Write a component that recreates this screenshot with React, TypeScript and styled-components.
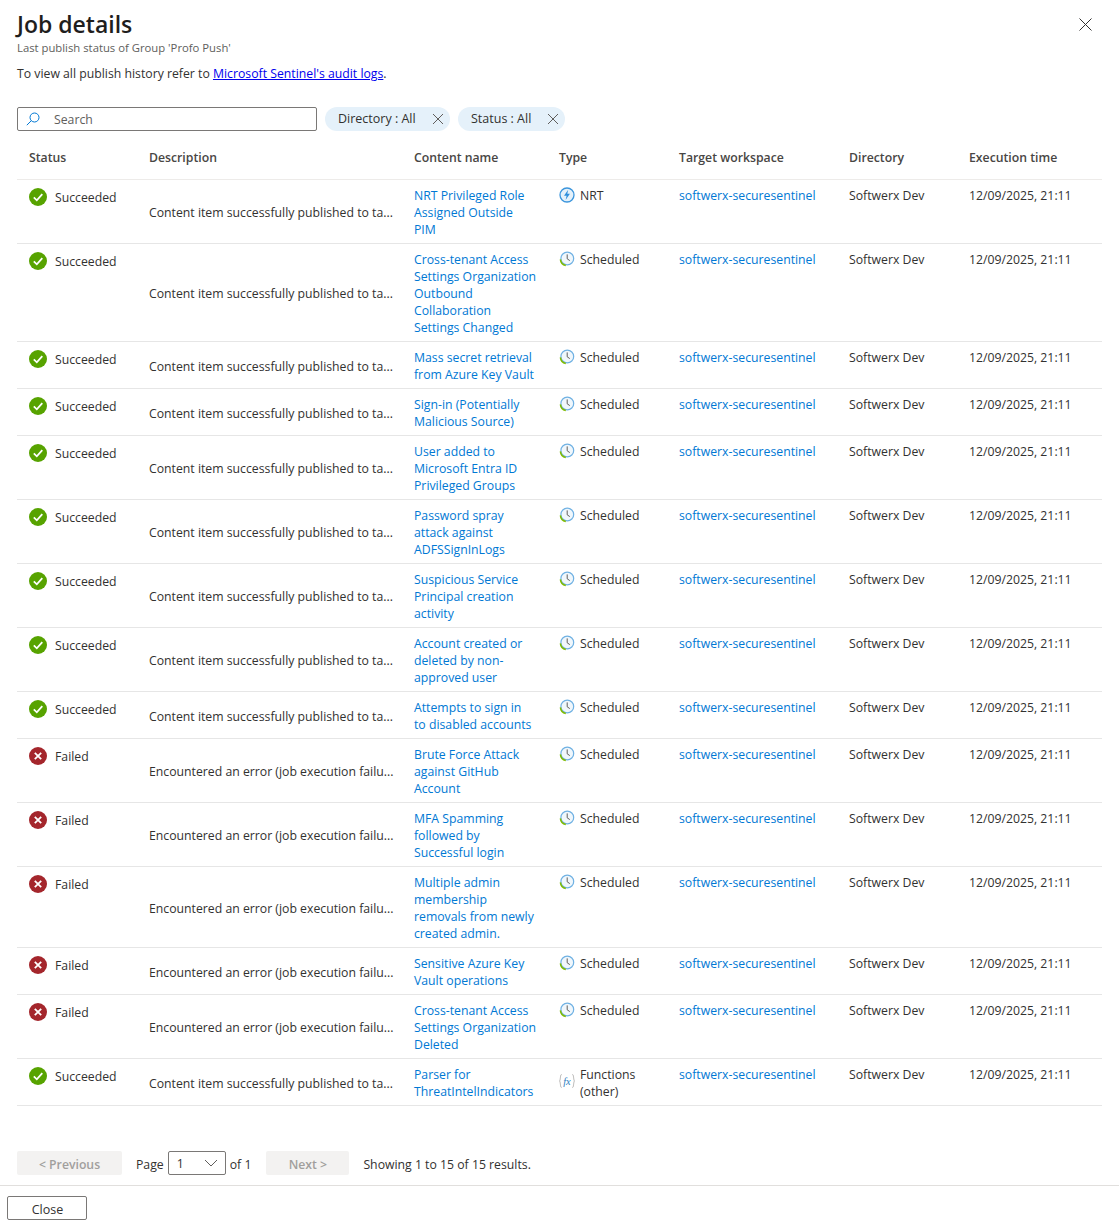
import styled, { createGlobalStyle } from 'styled-components';

const GlobalStyle = createGlobalStyle`
  html, body {
    margin: 0;
    padding: 0;
    background: #fff;
  }
  body {
    font-family: 'Open Sans', 'Noto Sans', sans-serif;
    font-size: 12.25px;
    color: #323130;
  }
`;

type JobRow = {
  ok: boolean;
  name: string[];
  kind: 'nrt' | 'scheduled' | 'functions';
};

const OK_TEXT = 'Content item successfully published to ta...';
const FAIL_TEXT = 'Encountered an error (job execution failu...';

const rows: JobRow[] = [
  { ok: true, kind: 'nrt', name: ['NRT Privileged Role', 'Assigned Outside', 'PIM'] },
  { ok: true, kind: 'scheduled', name: ['Cross-tenant Access', 'Settings Organization', 'Outbound', 'Collaboration', 'Settings Changed'] },
  { ok: true, kind: 'scheduled', name: ['Mass secret retrieval', 'from Azure Key Vault'] },
  { ok: true, kind: 'scheduled', name: ['Sign-in (Potentially', 'Malicious Source)'] },
  { ok: true, kind: 'scheduled', name: ['User added to', 'Microsoft Entra ID', 'Privileged Groups'] },
  { ok: true, kind: 'scheduled', name: ['Password spray', 'attack against', 'ADFSSignInLogs'] },
  { ok: true, kind: 'scheduled', name: ['Suspicious Service', 'Principal creation', 'activity'] },
  { ok: true, kind: 'scheduled', name: ['Account created or', 'deleted by non-', 'approved user'] },
  { ok: true, kind: 'scheduled', name: ['Attempts to sign in', 'to disabled accounts'] },
  { ok: false, kind: 'scheduled', name: ['Brute Force Attack', 'against GitHub', 'Account'] },
  { ok: false, kind: 'scheduled', name: ['MFA Spamming', 'followed by', 'Successful login'] },
  { ok: false, kind: 'scheduled', name: ['Multiple admin', 'membership', 'removals from newly', 'created admin.'] },
  { ok: false, kind: 'scheduled', name: ['Sensitive Azure Key', 'Vault operations'] },
  { ok: false, kind: 'scheduled', name: ['Cross-tenant Access', 'Settings Organization', 'Deleted'] },
  { ok: true, kind: 'functions', name: ['Parser for', 'ThreatIntelIndicators'] },
];

const columns = '120px 265px 145px 120px 170px 120px 145px';

const Page = styled.div`
  height: 1221px;
  display: flex;
  flex-direction: column;
  overflow: hidden;
`;

const Main = styled.main`
  flex: 1;
  padding: 10px 17px 0;
`;

const TitleBar = styled.div`
  display: flex;
  justify-content: space-between;
  align-items: flex-start;
`;

const Title = styled.h1`
  margin: 0;
  font-size: 23px;
  line-height: 28px;
  font-weight: 600;
  color: #1f1e1d;
`;

const Subtitle = styled.div`
  margin-top: 2px;
  font-size: 11.3px;
  line-height: 16px;
  color: #605e5c;
`;

const Intro = styled.p`
  margin: 9px 0 0;
  line-height: 17px;
  color: #323130;

  a {
    color: #0000ee;
    text-decoration: underline;
  }
`;

const CloseX = styled.svg`
  width: 13px;
  height: 13px;
  margin: 8px 10px 0 0;
  stroke: #323130;
  stroke-width: 1;
  flex: none;
`;

const FilterBar = styled.div`
  display: flex;
  align-items: center;
  gap: 8px;
  margin-top: 25px;
`;

const SearchBox = styled.div`
  width: 300px;
  height: 24px;
  box-sizing: border-box;
  border: 1px solid #7a7876;
  border-radius: 2px;
  display: flex;
  align-items: center;
  gap: 14px;
  padding-left: 8px;
  color: #605e5c;
`;

const SearchIcon = styled.svg`
  width: 14px;
  height: 14px;
  fill: none;
  stroke: #0078d4;
  stroke-width: 1;
`;

const Pill = styled.div<{ $width: number }>`
  width: ${(p) => p.$width}px;
  height: 24px;
  box-sizing: border-box;
  padding: 0 6px 1px 13px;
  background: #e5f1fa;
  border-radius: 12px;
  display: flex;
  align-items: center;
  justify-content: space-between;
  font-size: 12.5px;
  color: #323130;
`;

const PillX = styled.svg`
  width: 12px;
  height: 12px;
  stroke: #605e5c;
  stroke-width: 1;
`;

const Grid = styled.div`
  display: grid;
  grid-template-columns: ${columns};
  align-items: stretch;
`;

const HeaderRow = styled(Grid)`
  height: 45px;
  margin-top: 4px;
  align-items: center;
  border-bottom: 1px solid #edebe9;
  box-sizing: border-box;
`;

const HeaderCell = styled.div`
  padding-left: 12px;
  font-weight: 600;
  color: #484644;
`;

const Row = styled(Grid)`
  border-bottom: 1px solid #e6e6e6;
  box-sizing: border-box;
  padding: 7px 0 5px;
  line-height: 17px;
`;

const Cell = styled.div`
  padding-left: 12px;
  min-width: 0;
`;

const StatusCell = styled(Cell)`
  display: flex;
  align-items: flex-start;
  gap: 8px;
  padding-top: 2px;
`;

const StatusIcon = styled.svg`
  width: 18px;
  height: 18px;
  margin-top: -1px;
  flex: none;
`;

const Description = styled(Cell)`
  align-self: center;
  white-space: nowrap;
`;

const LinkText = styled.a`
  color: #0078d4;
  text-decoration: none;
  display: block;
  white-space: nowrap;
`;

const TypeCell = styled(Cell)`
  display: flex;
  gap: 5px;
  align-items: flex-start;
`;

const TypeIcon = styled.svg<{ $top?: number }>`
  width: 16px;
  height: 16px;
  flex: none;
  margin-top: ${(p) => p.$top ?? 0}px;
`;

const Pager = styled.div`
  display: flex;
  align-items: center;
  height: 24px;
  margin-top: 45px;
`;

const PagerButton = styled.div<{ $width: number; $left?: number }>`
  width: ${(p) => p.$width}px;
  height: 24px;
  box-sizing: border-box;
  padding-top: 2px;
  margin-left: ${(p) => p.$left ?? 0}px;
  background: #f3f2f1;
  border-radius: 2px;
  color: #a19f9d;
  font-weight: 600;
  display: flex;
  align-items: center;
  justify-content: center;
`;

const PagerLabel = styled.span<{ $left: number }>`
  margin: 2px 0 0 ${(p) => p.$left}px;
  white-space: nowrap;
`;

const PageSelect = styled.div`
  width: 58px;
  height: 24px;
  margin-left: 4px;
  box-sizing: border-box;
  border: 1px solid #7a7876;
  border-radius: 2px;
  display: flex;
  align-items: center;
  justify-content: space-between;
  padding: 0 7px 0 8px;
`;

const Chevron = styled.svg`
  width: 14px;
  height: 14px;
  fill: none;
  stroke: #605e5c;
  stroke-width: 1;
`;

const Footer = styled.footer`
  flex: none;
  height: 36px;
  box-sizing: border-box;
  border-top: 1px solid #e1dfdd;
  padding: 10px 0 0 7px;
`;

const CloseButton = styled.button`
  width: 80px;
  height: 24px;
  box-sizing: border-box;
  background: #fff;
  border: 1px solid #7a7876;
  border-radius: 2px;
  font: 400 12.5px 'Open Sans', 'Noto Sans', sans-serif;
  color: #323130;
  padding: 2px 0 0 1px;
`;

const FxText = styled.text`
  font-family: 'Liberation Serif', serif;
  font-style: italic;
  font-size: 10.5px;
  fill: #2f7fc1;
  text-anchor: middle;
`;

const SuccessIcon = () => (
  <StatusIcon viewBox="0 0 18 18">
    <circle cx="9" cy="9" r="9" fill="#57a300" />
    <path d="M4.8 9.4 7.8 12.3 13.3 6.2" fill="none" stroke="#fff" strokeWidth="1.8" />
  </StatusIcon>
);

const FailedIcon = () => (
  <StatusIcon viewBox="0 0 18 18">
    <circle cx="9" cy="9" r="9" fill="#a4262c" />
    <path d="M5.8 5.8 12.2 12.2M12.2 5.8 5.8 12.2" fill="none" stroke="#fff" strokeWidth="1.8" />
  </StatusIcon>
);

const KindIcon = ({ kind }: { kind: JobRow['kind'] }) => {
  if (kind === 'nrt') {
    return (
      <TypeIcon viewBox="0 0 16 16">
        <circle cx="8" cy="8" r="7" fill="#e5f1fa" stroke="#3b95dc" strokeWidth="1.3" />
        <path d="M9.2 2.8 5 8.8h2.6L6.6 13l4.3-6.2H8.3z" fill="#2f8fdc" />
      </TypeIcon>
    );
  }
  if (kind === 'scheduled') {
    return (
      <TypeIcon viewBox="0 0 16 16">
        <circle cx="8.3" cy="7.5" r="6.4" fill="#f0f7fc" stroke="#6fb1e3" strokeWidth="1.2" />
        <path d="M1.4 8.4a7 7 0 0 0 5.4 6.2" fill="none" stroke="#7fba00" strokeWidth="1.5" />
        <path d="M8.2 3.4v4.4l2.6 1.8" fill="none" stroke="#605e5c" strokeWidth="1" />
      </TypeIcon>
    );
  }
  return (
    <TypeIcon viewBox="0 0 16 16" $top={7}>
      <path d="M2.6 1.5C1 1.5 1.8 7 .4 8c1.4 1 .6 6.5 2.2 6.5M13.4 1.5c1.6 0 .8 5.5 2.2 6.5-1.4 1-.6 6.5-2.2 6.5" fill="none" stroke="#a19f9d" strokeWidth=".8" />
      <FxText x="8" y="11.5">fx</FxText>
    </TypeIcon>
  );
};

const kindLabel: Record<JobRow['kind'], string[]> = {
  nrt: ['NRT'],
  scheduled: ['Scheduled'],
  functions: ['Functions', '(other)'],
};

const App = () => {
  return (
    <Page>
      <GlobalStyle />
      <Main>
        <TitleBar>
          <div>
            <Title>Job details</Title>
            <Subtitle>Last publish status of Group 'Profo Push'</Subtitle>
          </div>
          <CloseX viewBox="0 0 13 13">
            <path d="M.5.5 12.5 12.5M12.5.5.5 12.5" />
          </CloseX>
        </TitleBar>
        <Intro>
          To view all publish history refer to <a href="#audit">Microsoft Sentinel's audit logs</a>.
        </Intro>
        <FilterBar>
          <SearchBox>
            <SearchIcon viewBox="0 0 14 14">
              <circle cx="8.5" cy="5.5" r="4.5" />
              <path d="M5.3 8.7.8 13.2" />
            </SearchIcon>
            Search
          </SearchBox>
          <Pill $width={125}>
            <span>Directory : All</span>
            <PillX viewBox="0 0 12 12">
              <path d="M1 1 11 11M11 1 1 11" />
            </PillX>
          </Pill>
          <Pill $width={107}>
            <span>Status : All</span>
            <PillX viewBox="0 0 12 12">
              <path d="M1 1 11 11M11 1 1 11" />
            </PillX>
          </Pill>
        </FilterBar>
        <HeaderRow>
          <HeaderCell>Status</HeaderCell>
          <HeaderCell>Description</HeaderCell>
          <HeaderCell>Content name</HeaderCell>
          <HeaderCell>Type</HeaderCell>
          <HeaderCell>Target workspace</HeaderCell>
          <HeaderCell>Directory</HeaderCell>
          <HeaderCell>Execution time</HeaderCell>
        </HeaderRow>
        {rows.map((row) => (
          <Row key={row.name.join(' ')}>
            <StatusCell>
              {row.ok ? <SuccessIcon /> : <FailedIcon />}
              {row.ok ? 'Succeeded' : 'Failed'}
            </StatusCell>
            <Description>{row.ok ? OK_TEXT : FAIL_TEXT}</Description>
            <Cell>
              {row.name.map((line) => (
                <LinkText key={line} href="#rule">{line}</LinkText>
              ))}
            </Cell>
            <TypeCell>
              <KindIcon kind={row.kind} />
              <div>
                {kindLabel[row.kind].map((line) => (
                  <div key={line}>{line}</div>
                ))}
              </div>
            </TypeCell>
            <Cell>
              <LinkText href="#workspace">softwerx-securesentinel</LinkText>
            </Cell>
            <Cell>Softwerx Dev</Cell>
            <Cell>12/09/2025, 21:11</Cell>
          </Row>
        ))}
        <Pager>
          <PagerButton $width={105}>&lt; Previous</PagerButton>
          <PagerLabel $left={14}>Page</PagerLabel>
          <PageSelect>
            1
            <Chevron viewBox="0 0 14 14">
              <path d="M1 4 7 10 13 4" />
            </Chevron>
          </PageSelect>
          <PagerLabel $left={4}>of 1</PagerLabel>
          <PagerButton $width={83} $left={15}>Next &gt;</PagerButton>
          <PagerLabel $left={14}>Showing 1 to 15 of 15 results.</PagerLabel>
        </Pager>
      </Main>
      <Footer>
        <CloseButton>Close</CloseButton>
      </Footer>
    </Page>
  );
};

export default App;
